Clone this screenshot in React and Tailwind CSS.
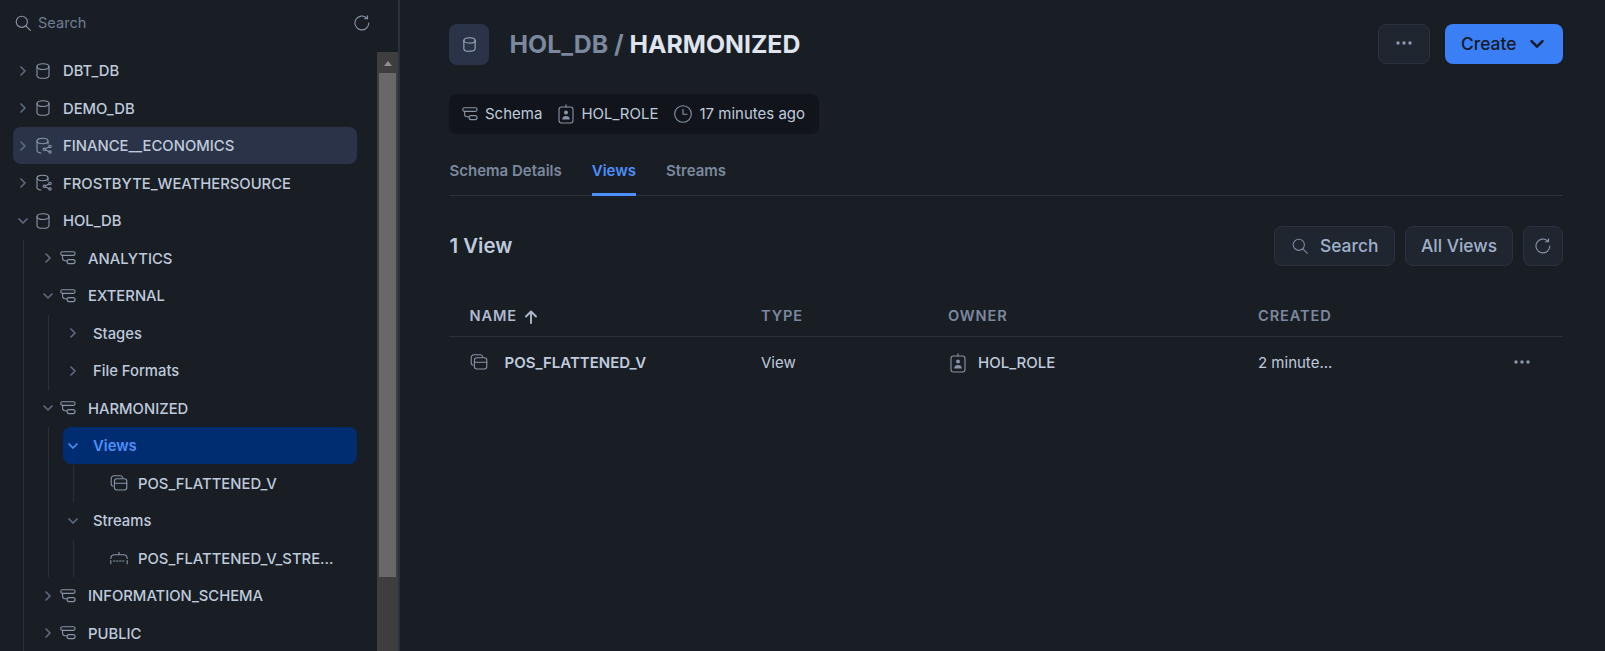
import React from 'react';

const S = { fill: 'none', stroke: 'currentColor', strokeWidth: 1.1, strokeLinecap: 'round', strokeLinejoin: 'round' };

const Chevron = ({ open, className = 'text-[#5d6a80]', size = 14 }) => (
  <svg width={size} height={size} viewBox="0 0 14 14" className={className} fill="none" stroke="currentColor" strokeWidth="1.7" strokeLinecap="round" strokeLinejoin="round">
    {open ? <path d="M3 5l4 4 4-4" /> : <path d="M5 3l4 4-4 4" />}
  </svg>
);
const Db = ({ size = 16, className = 'text-[#8894a8]' }) => (
  <svg width={size} height={size} viewBox="0 0 16 16" className={className} {...S}>
    <path d="M2 3.600v8.800c0 1.700 2.400 2.900 6 2.900s6-1.200 6-2.900V3.600" />
    <path d="M2 3.600C2 1.900 4.400.7 8 .7s6 1.200 6 2.900-2.400 2.900-6 2.900-6-1.200-6-2.900z" />
  </svg>
);
const SharedDb = () => (
  <svg width="18" height="18" viewBox="0 0 18 18" className="text-[#8894a8]" {...S}>
    <path d="M2 4v9.500c0 1.300 1.500 2.200 4 2.500" />
    <path d="M13 4v3" />
    <path d="M2 4c0-1.600 2.200-2.700 5.500-2.700S13 2.400 13 4s-2.200 2.700-5.500 2.700S2 5.600 2 4z" />
    <circle cx="9.300" cy="12.300" r="1.200" />
    <circle cx="15" cy="9.500" r="1.200" />
    <circle cx="15" cy="15.100" r="1.200" />
    <path d="M10.400 11.700l3.500-1.600M10.400 12.900l3.500 1.600" />
  </svg>
);
const Schema = ({ className = 'text-[#8894a8]' }) => (
  <svg width="16" height="14" viewBox="0 0 16 14" className={className} {...S}>
    <rect x="0.700" y="0.800" width="14.400" height="3.600" rx="1.800" />
    <path d="M2.600 4.400v2.800c0 1.500.9 2.500 2.400 2.500h2" />
    <rect x="7" y="8.600" width="8.100" height="4" rx="2" />
  </svg>
);
const ViewIcon = ({ size = 18 }) => (
  <svg width={size} height={size} viewBox="0 0 18 18" className="text-[#8894a8]" {...S}>
    <path d="M3 12.200C1.900 12 1.200 11 1.200 9.800V4.500c0-1.500 1.200-2.700 2.700-2.700h6.300c1.200 0 2.200.8 2.500 1.900" />
    <rect x="4.400" y="4.700" width="12.400" height="11.300" rx="2.500" />
    <path d="M4.400 9.200h12.400" />
  </svg>
);
const StreamIcon = () => (
  <svg width="18" height="14" viewBox="0 0 18 14" className="text-[#8894a8]" {...S}>
    <path d="M0.800 7.500C1 5.100 2.300 3.800 4.300 3.800h9.400c2 0 3.300 1.300 3.500 3.700" />
    <path d="M9 3.600V1.400" />
    <path d="M3.500 10h11" strokeDasharray="1.400 1.600" />
    <path d="M0.800 9.500v3.200M17.200 9.500v3.200" />
  </svg>
);
const Role = ({ className = 'text-[#8894a8]' }) => (
  <svg width="16" height="20" viewBox="0 0 16 20" className={className} {...S}>
    <rect x="1" y="3" width="14" height="16" rx="2.400" />
    <path d="M8 3V0.800" />
    <circle cx="8" cy="8.600" r="2" fill="currentColor" stroke="none" />
    <path d="M4.200 15.400c0-2.200 1.600-3.400 3.800-3.400s3.800 1.200 3.800 3.400z" fill="currentColor" stroke="none" />
  </svg>
);
const Clock = () => (
  <svg width="18" height="18" viewBox="0 0 18 18" className="text-[#8894a8]" {...S}>
    <circle cx="9" cy="9" r="8.300" />
    <path d="M9 4.300V9.300h4" />
  </svg>
);
const SearchIcon = ({ className = 'text-[#8894a8]' }) => (
  <svg width="16" height="16" viewBox="0 0 16 16" className={className} {...S}>
    <circle cx="6.800" cy="6.800" r="5.600" />
    <path d="M10.900 10.900l4.400 4.400" />
  </svg>
);
const Refresh = ({ className = 'text-[#8894a8]' }) => (
  <svg width="16" height="16" viewBox="0 0 16 16" className={className} {...S}>
    <path d="M14.800 8A6.900 6.900 0 1 1 12.700 3" />
    <path d="M13.500 0.700v3h-3" />
  </svg>
);
const Dots = ({ className = 'text-[#8d99ae]' }) => (
  <svg width="16" height="4" viewBox="0 0 16 4" className={className} fill="currentColor">
    <circle cx="2" cy="2" r="1.700" /><circle cx="8" cy="2" r="1.700" /><circle cx="14" cy="2" r="1.700" />
  </svg>
);

const Row = ({ children, className = '' }) => (
  <div className={`flex h-[37.5px] items-center overflow-hidden whitespace-nowrap text-[14.8px] font-medium text-[#bfcadc] ${className}`}>
    {children}
  </div>
);

const Label = ({ children, className = '' }) => <span className={`pt-[1px] ${className}`}>{children}</span>;

const Top = ({ name, open, shared, active }) => (
  <Row>
    <div className={`ml-[13px] flex h-[37px] w-[344px] items-center rounded-lg pl-[3px] ${active ? 'bg-[#2a3347]' : ''}`}>
      <Chevron open={open} />
      <span className="ml-[5px] flex w-[28px] items-center">{shared ? <SharedDb /> : <Db />}</span>
      <Label>{name}</Label>
    </div>
  </Row>
);

const SchemaRow = ({ name, open }) => (
  <Row className="pl-[17px]">
    <Chevron open={open} />
    <span className="ml-[5px] flex w-[28px] items-center"><Schema /></span>
    <Label>{name}</Label>
  </Row>
);

const Sub = ({ name, open }) => (
  <Row className="pl-[17px]">
    <Chevron open={open} />
    <Label className="ml-[13px]">{name}</Label>
  </Row>
);

const Leaf = ({ name, icon }) => (
  <Row className="pl-[36px]">
    <span className="flex w-[28px] items-center">{icon}</span>
    <Label>{name}</Label>
  </Row>
);

const Sidebar = () => (
  <aside className="flex h-[651px] w-[400px] shrink-0 flex-col overflow-hidden border-r-2 border-[#2a303c]">
    <div className="flex h-[52px] shrink-0 items-start pt-[15px]">
      <span className="ml-[15px] flex w-[23px]"><SearchIcon /></span>
      <span className="text-[14.6px] leading-4 text-[#6f7c93]">Search</span>
      <span className="ml-auto mr-[28px]"><Refresh /></span>
    </div>
    <div className="flex min-h-0 flex-1">
      <div className="min-w-0 flex-1">
        <Top name="DBT_DB" />
        <Top name="DEMO_DB" />
        <Top name="FINANCE__ECONOMICS" shared active />
        <Top name="FROSTBYTE_WEATHERSOURCE" shared />
        <Top name="HOL_DB" open />
        <div className="ml-[23px] border-l border-[#2a303c]">
          <SchemaRow name="ANALYTICS" />
          <SchemaRow name="EXTERNAL" open />
          <div className="ml-[24px] border-l border-[#2a303c]">
            <Sub name="Stages" />
            <Sub name="File Formats" />
          </div>
          <SchemaRow name="HARMONIZED" open />
          <div className="ml-[24px] border-l border-[#2a303c]">
            <div className="ml-[14px] mr-[20px] flex h-[37px] mb-[0.5px] items-center rounded-lg bg-[#002d72] pl-[3px] text-[14.8px] font-semibold text-[#4d8ffa]">
              <Chevron open className="text-[#4d8ffa]" />
              <Label className="ml-[13px]">Views</Label>
            </div>
            <div className="ml-[24px] border-l border-[#2a303c]">
              <Leaf name="POS_FLATTENED_V" icon={<ViewIcon />} />
            </div>
            <Sub name="Streams" open />
            <div className="ml-[24px] border-l border-[#2a303c]">
              <Leaf name="POS_FLATTENED_V_STRE..." icon={<StreamIcon />} />
            </div>
          </div>
          <SchemaRow name="INFORMATION_SCHEMA" />
          <SchemaRow name="PUBLIC" />
        </div>
      </div>
      <div className="flex w-[21px] shrink-0 flex-col bg-[#3e3e3e]">
        <div className="flex h-[21px] shrink-0 items-center justify-center pt-[2px]">
          <div className="h-0 w-0 border-x-[4.500px] border-b-[5px] border-x-transparent border-b-[#8f8f8f]" />
        </div>
        <div className="mx-[2px] h-[504px] bg-[#686868]" />
      </div>
    </div>
  </aside>
);

const Btn = ({ children, className = '' }) => (
  <div className={`flex h-10 items-center rounded-lg border border-[#2a3242] bg-[#1f2630] text-[17.4px] font-medium text-[#9fb0c9] ${className}`}>
    {children}
  </div>
);

const Meta = ({ icon, text }) => (
  <div className="flex items-center gap-[7px]">
    {icon}
    <span>{text}</span>
  </div>
);

const Main = () => (
  <main className="min-w-0 flex-1 pl-[49px] pr-[42px]">
    <header className="flex items-start pt-[24px]">
      <div className="flex h-[41px] w-[40px] items-center justify-center rounded-lg bg-[#2a3347]">
        <Db className="text-[#a4afc2]" size={15} />
      </div>
      <h1 className="ml-[20.5px] mt-[2px] text-[24.8px] leading-[37px] font-bold text-[#7c889e]">
        HOL_DB / <span className="text-[#dfe4ee]">HARMONIZED</span>
      </h1>
      <div className="ml-auto flex gap-[15px]">
        <Btn className="w-[52px] justify-center"><span className="-mt-[2px] flex"><Dots /></span></Btn>
        <div className="flex h-10 w-[118px] items-center gap-[13px] rounded-lg bg-[#3a7ff6] pl-[16px] text-[17.4px] font-medium text-[#141a26]">
          Create
          <svg width="16" height="16" viewBox="0 0 16 16" fill="none" stroke="currentColor" strokeWidth="2.500" strokeLinecap="round" strokeLinejoin="round"><path d="M2.500 5.200L8 10.700l5.500-5.500" /></svg>
        </div>
      </div>
    </header>
    <div className="mt-[29px] flex h-10 w-[370px] items-center gap-[16px] rounded-lg bg-[#11151b] pl-[13px] text-[15px] text-[#bfcadc]">
      <Meta icon={<Schema />} text="Schema" />
      <Meta icon={<Role />} text="HOL_ROLE" />
      <Meta icon={<Clock />} text="17 minutes ago" />
    </div>
    <nav className="mt-[21px] flex h-[41px] gap-[30px] border-b border-[#2a303c] text-[15px] font-semibold text-[#7c889e]">
      <span className="pl-[0.5px] pt-[5px]">Schema Details</span>
      <span className="-mb-px h-[41px] border-b-[3px] border-[#4d8ffa] pt-[5px] text-[#4d8ffa]">Views</span>
      <span className="pt-[5px]">Streams</span>
    </nav>
    <section className="mt-[30px] flex h-10 items-center">
      <h2 className="pl-[0.5px] text-[20.4px] font-semibold text-[#bfcadc]">1 View</h2>
      <div className="ml-auto flex gap-[10px]">
        <Btn className="w-[121px] gap-3 pl-[17px]"><SearchIcon className="text-[#7c889e]" />Search</Btn>
        <Btn className="w-[108px] justify-center">All Views</Btn>
        <Btn className="w-[40px] justify-center"><Refresh /></Btn>
      </div>
    </section>
    <div className="mt-[30px] grid h-[41px] grid-cols-[291px_187px_310px_1fr] items-center border-b border-[#2a303c] pt-[2px] text-[14.600px] font-semibold tracking-[0.06em] text-[#7c889e]">
      <div className="flex items-center gap-[7px] pl-[20.5px] text-[#aebace]">
        NAME
        <svg width="14" height="14" viewBox="0 0 14 14" fill="none" stroke="currentColor" strokeWidth="1.900" strokeLinecap="round" strokeLinejoin="round"><path d="M7 13V1.500M2 6.500l5-5 5 5" /></svg>
      </div>
      <div className="pl-[21px]">TYPE</div>
      <div className="pl-[21px]">OWNER</div>
      <div className="pl-[21px]">CREATED</div>
    </div>
    <div className="grid h-[53px] grid-cols-[291px_187px_310px_1fr] items-center text-[15px] text-[#bfcadc]">
      <div className="flex items-center gap-[16.5px] pl-[21px] font-semibold"><span className="-mt-[3px] flex"><ViewIcon /></span>POS_FLATTENED_V</div>
      <div className="pl-[21px]">View</div>
      <div className="flex items-center gap-[12px] pl-[23px] font-medium"><span className="-mt-[2px] flex"><Role /></span>HOL_ROLE</div>
      <div className="flex items-center pl-[21px]">2 minute...<span className="-mt-[3px] ml-auto mr-[33px] flex"><Dots /></span></div>
    </div>
  </main>
);

export default function App() {
  return (
    <div className="flex h-[651px] w-[1605px] overflow-hidden bg-[#191e25] font-['Inter',sans-serif]">
      <Sidebar />
      <Main />
    </div>
  );
}
